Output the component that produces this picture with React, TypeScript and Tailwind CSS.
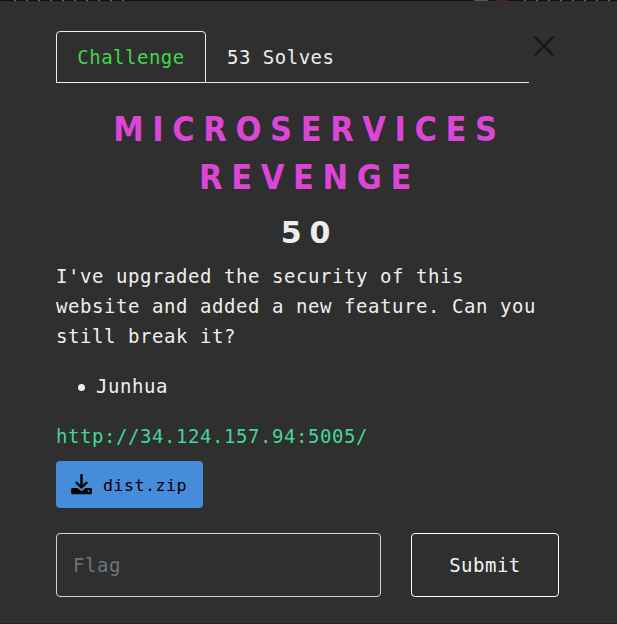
import React from "react";

function DownloadIcon() {
  return (
    <svg viewBox="0 0 21 21" className="h-[21px] w-[21px]" fill="none">
      <path d="M1.6 14h18c.9 0 1.3.5 1.3 1.3v3.6c0 .8-.5 1.3-1.3 1.3h-18c-.9 0-1.4-.5-1.4-1.3v-3.6c0-.8.5-1.3 1.4-1.3Z" fill="#000" />
      <path d="M5 9.6l5.5 5 5.5-5" stroke="#478cdb" strokeWidth="4.4" strokeLinejoin="round" />
      <path d="M10.5 1v12M5.6 8.8l4.9 4.6 4.9-4.6" stroke="#000" strokeWidth="2.4" strokeLinecap="round" strokeLinejoin="round" />
      <circle cx="17.5" cy="17.1" r="1" fill="#478cdb" />
    </svg>
  );
}

export default function App() {
  return (
    <div className="flex h-[624px] w-[617px] flex-col overflow-hidden bg-[#2f2f2f] font-['DejaVu_Sans_Mono',monospace] text-[19px] leading-[30px] tracking-[0.56px] text-[#eeeeee]">
      <div className="flex h-px shrink-0 bg-[#111113]">
        <div className="ml-[14px] w-[114px] bg-[repeating-linear-gradient(90deg,#666_0_2px,#111113_2px_12px)]" />
        <div className="ml-[346px] w-[14px] bg-[#555]" />
        <div className="ml-[7px] w-[12px] bg-[#5b1720]" />
        <div className="ml-[17px] w-[90px] bg-[repeating-linear-gradient(90deg,#666_0_2px,#111113_2px_12px)]" />
      </div>

      <div className="flex pl-[56px] pt-[30px]">
        <nav className="flex h-[52px] w-[473px] border-b border-[#e8e8e8]">
          <button className="h-[52px] w-[150px] shrink-0 rounded-t-[4px] border border-[#eeeeee] tracking-[0.5px] text-[#41d74b]">Challenge</button>
          <button className="ml-[21px] h-[51px] tracking-[0.5px]">53 Solves</button>
        </nav>
        <button aria-label="Close" className="ml-[5px] mt-[5px] h-5 w-5">
          <svg viewBox="0 0 20 20" className="h-5 w-5" stroke="#191919" strokeWidth="2.5" strokeLinecap="round">
            <path d="M1.2 1.2 18.8 18.8M18.8 1.2 1.2 18.8" />
          </svg>
        </button>
      </div>

      <h2 className="mt-[22px] pl-0.5 text-center font-['DejaVu_Sans_Condensed','DejaVu_Sans',sans-serif] text-[34px] font-bold leading-[48px] tracking-[8.6px] text-[#dc46d6] [font-stretch:condensed]">
        MICROSERVICES<br />REVENGE
      </h2>
      <h3 className="mt-[8px] h-[48px] pl-0.5 text-center font-['DejaVu_Sans',sans-serif] text-[30px] font-bold leading-[48px] tracking-[8px]">50</h3>

      <main className="px-[56px] pt-[4px]">
        <p>I've upgraded the security of this<br />website and added a new feature. Can you<br />still break it?</p>
        <ul className="mt-5">
          <li className="flex items-center pl-[22px]">
            <span className="mr-[11px] mt-[3px] h-[7px] w-[7px] rounded-full bg-[#eeeeee]" />
            Junhua
          </li>
        </ul>
        <a className="mt-5 block text-[#43d698]">http://34.124.157.94:5005/</a>
        <button className="mt-[10px] flex h-[47px] w-[147px] items-center rounded-[4px] bg-[#478cdb] pl-[15px] text-[16.6px] tracking-[0.5px] text-black">
          <DownloadIcon />
          <span className="ml-[11px] mt-[3px]">dist.zip</span>
        </button>
        <div className="mt-[25px] flex w-[503px] gap-[30px]">
          <input placeholder="Flag" className="h-16 w-[325px] rounded-[4px] border border-[#ced4da] bg-transparent px-4 tracking-[0.56px] placeholder:text-[#6c757d]" />
          <button className="h-16 w-[148px] rounded-[4px] border border-white tracking-[0.5px] text-[#f4f4f4]">Submit</button>
        </div>
      </main>
      <div className="mt-auto h-px shrink-0 bg-[#211d20]" />
    </div>
  );
}
